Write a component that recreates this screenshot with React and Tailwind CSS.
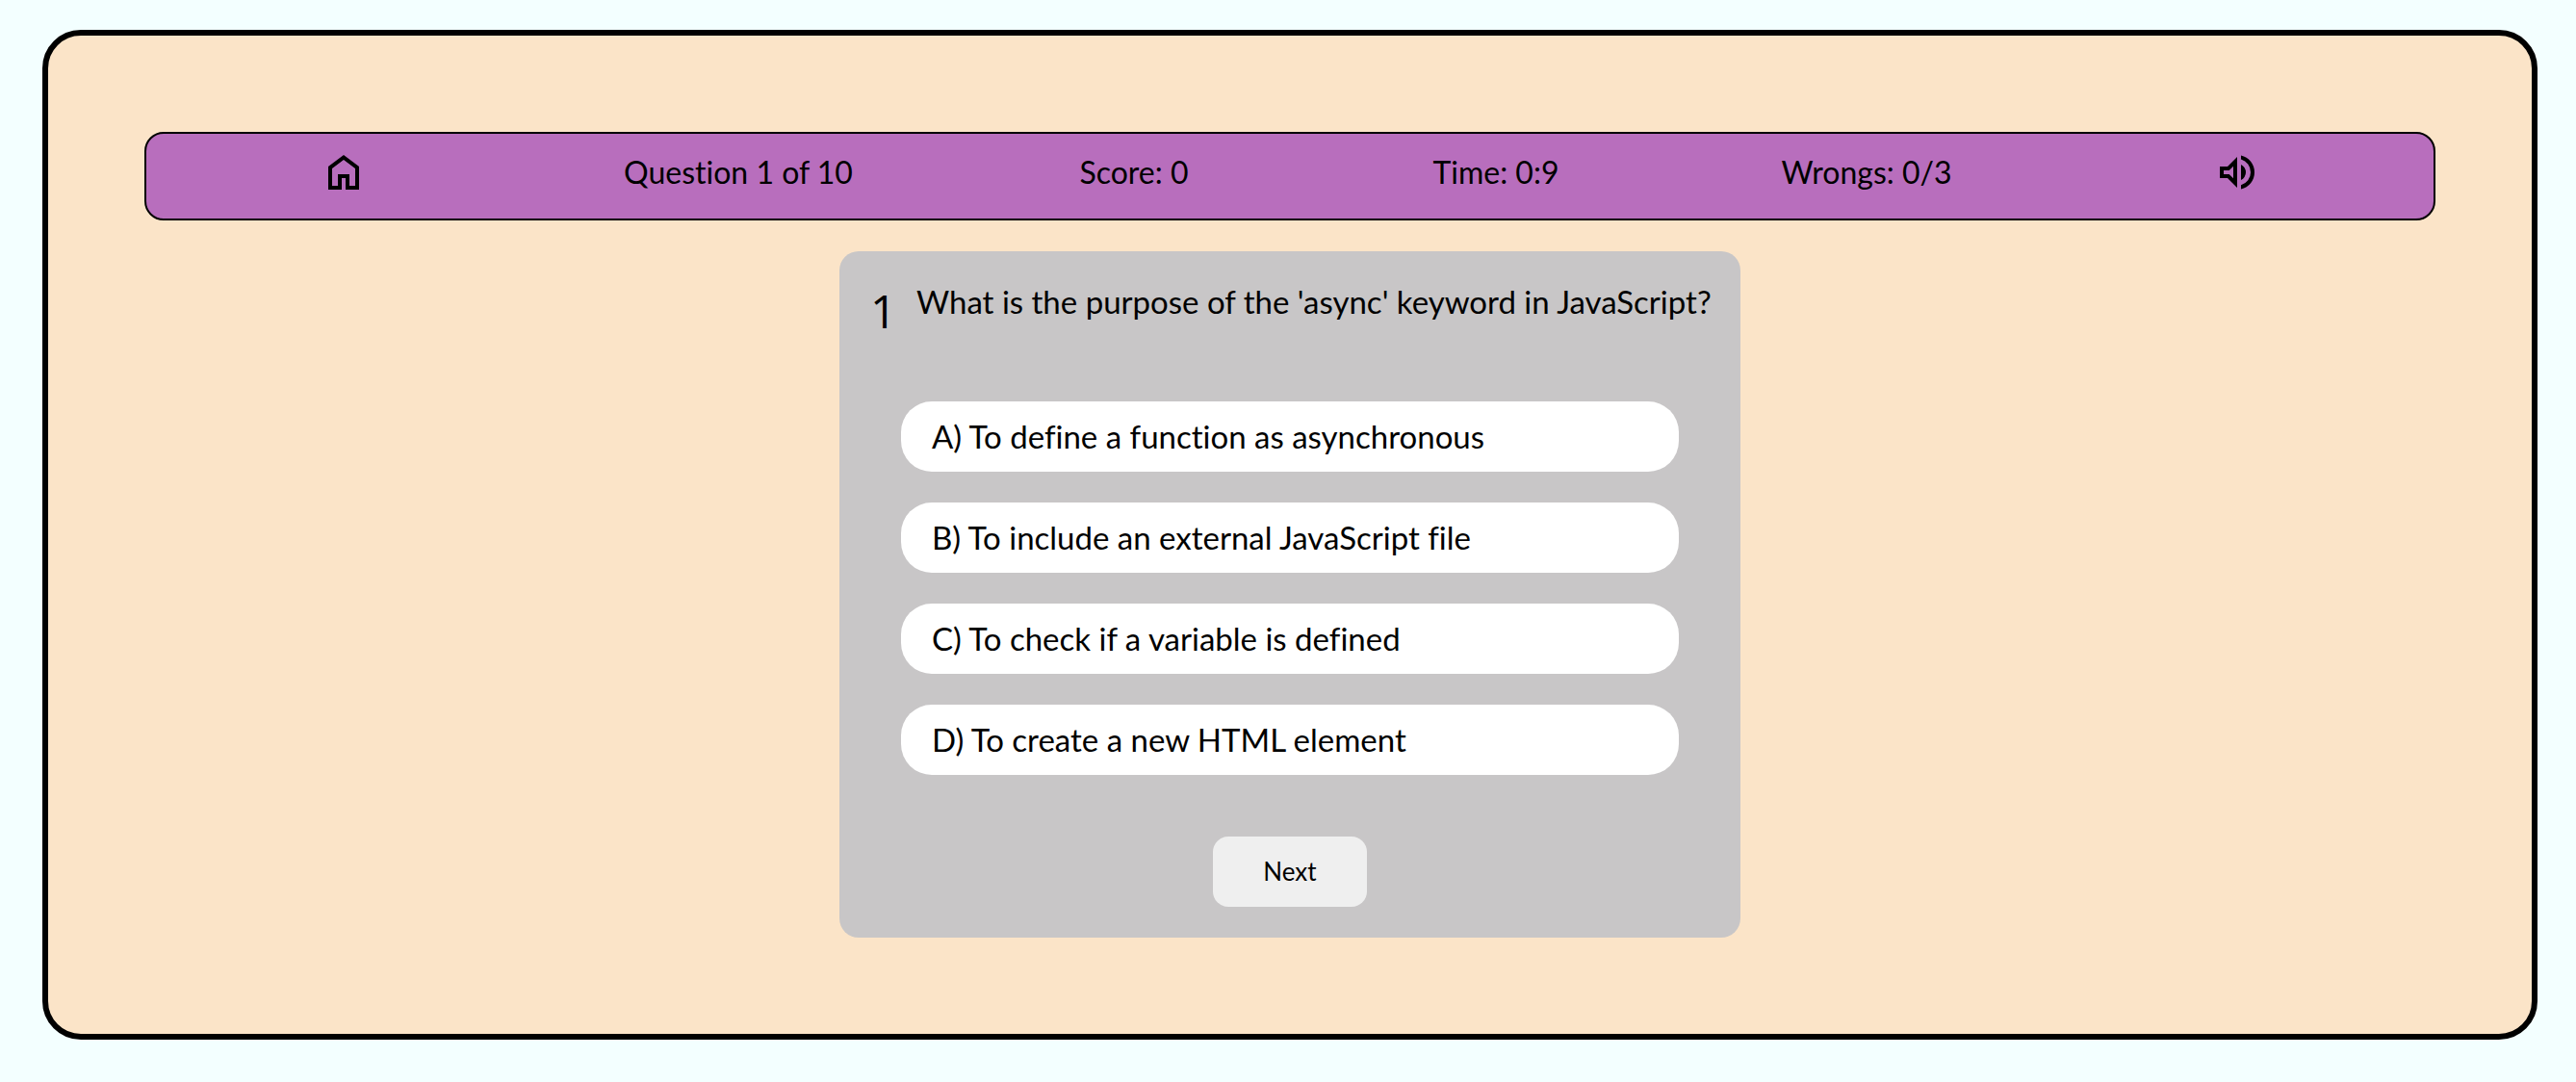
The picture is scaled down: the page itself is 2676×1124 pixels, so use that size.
const ANSWERS = [
  "A) To define a function as asynchronous",
  "B) To include an external JavaScript file",
  "C) To check if a variable is defined",
  "D) To create a new HTML element",
];

function HomeIcon() {
  return (
    <svg viewBox="0 -960 960 960" className="size-12" fill="currentColor" aria-hidden="true">
      <path d="M240-200h120v-240h240v240h120v-360L480-740 240-560v360Zm-80 80v-480l320-240 320 240v480H520v-240h-80v240H160Zm320-350Z" />
    </svg>
  );
}

function VolumeIcon() {
  return (
    <svg viewBox="0 -960 960 960" className="size-12" fill="currentColor" aria-hidden="true">
      <path d="M560-131v-82q90-26 145-100t55-168q0-94-55-168T560-749v-82q124 28 202 125.5T840-481q0 127-78 224.5T560-131ZM120-360v-240h160l200-200v640L280-360H120Zm440 40v-322q47 22 73.5 66t26.5 96q0 51-26.5 94.5T560-320ZM400-606l-86 86H200v80h114l86 86v-252ZM300-480Z" />
    </svg>
  );
}

function StatusBar() {
  return (
    <header className="grid grid-cols-[410fr_410fr_412fr_340fr_430fr_340fr] items-start justify-items-center rounded-[20px] border-2 border-black bg-[#b86ebd] pt-4 pr-[34px] pb-6 text-[32px] leading-12">
      <button type="button" aria-label="Home">
        <HomeIcon />
      </button>
      <p>Question 1 of 10</p>
      <p>Score: 0</p>
      <p>Time: 0:9</p>
      <p>Wrongs: 0/3</p>
      <button type="button" aria-label="Sound">
        <VolumeIcon />
      </button>
    </header>
  );
}

function QuestionCard() {
  return (
    <main className="mx-auto mt-8 flex w-full max-w-[936px] flex-col rounded-[20px] bg-[#c8c6c7] p-8">
      <div className="flex items-start gap-5">
        <span className="w-7 shrink-0 font-['Open_Sans',sans-serif] text-5xl leading-[60px] font-medium">1</span>
        <h1 className="text-[33px] leading-10 whitespace-nowrap">What is the purpose of the 'async' keyword in JavaScript?</h1>
      </div>
      <div className="mt-16 flex flex-col gap-8 px-8">
        {ANSWERS.map((answer) => (
          <button
            key={answer}
            type="button"
            className="rounded-[32px] bg-white px-8 py-4 text-left text-[33px] leading-[41px]"
          >
            {answer}
          </button>
        ))}
      </div>
      <button
        type="button"
        className="mt-16 w-40 self-center rounded-2xl bg-[#efefef] py-4 text-[26px] leading-[41px]"
      >
        Next
      </button>
    </main>
  );
}

export default function App() {
  return (
    <div className="min-h-screen bg-[#f3ffff] px-10 py-[31px] pl-11 font-['Lato',sans-serif] text-black [font-variant-ligatures:none]">
      <div className="rounded-[40px] border-6 border-black bg-[#fbe4c8] p-[100px]">
        <StatusBar />
        <QuestionCard />
      </div>
    </div>
  );
}
